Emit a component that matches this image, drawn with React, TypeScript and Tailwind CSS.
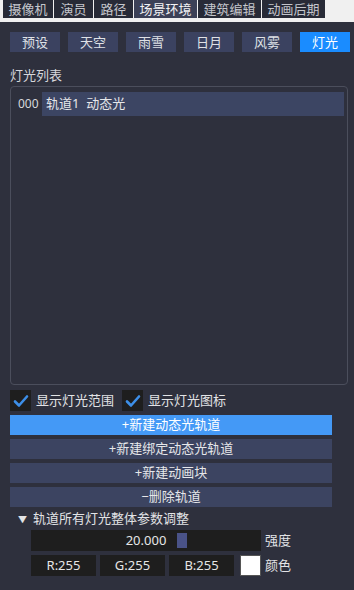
import React from "react";

const font = { fontFamily: '"Noto Sans", "Noto Sans CJK SC", sans-serif' };

function Check() {
  return (
    <div className="w-[21px] h-[21px] bg-[#1e1e1e] flex items-center justify-center">
      <svg width="16" height="14" viewBox="0 0 16 14">
        <polyline points="2,7.5 6,11.5 14,2.5" fill="none" stroke="#3d8fe8" strokeWidth="2.6" strokeLinecap="round" strokeLinejoin="round" />
      </svg>
    </div>
  );
}

export default function App() {
  const tabs = [
    { t: "摄像机", w: "w-[50px]" },
    { t: "演员", w: "w-[39px]" },
    { t: "路径", w: "w-[39px]" },
    { t: "场景环境", w: "w-[63px]", a: true },
    { t: "建筑编辑", w: "w-[63px]" },
    { t: "动画后期", w: "w-[63px]" },
  ];
  const sub = ["预设", "天空", "雨雪", "日月", "风雾", "灯光"];
  return (
    <div className="w-[354px] h-[590px] bg-[#f0f0f0] flex flex-col overflow-hidden" style={font}>
      <div className="flex gap-[1px] pl-[3px] h-[18px]">
        {tabs.map((x) => (
          <div
            key={x.t}
            className={`${x.w} h-[18px] flex items-center justify-center text-[13px] leading-none ${x.a ? "bg-[#3c4157] text-[#f2f2f4]" : "bg-[#282b37] text-[#c4c6cc]"}`}
          >
            {x.t}
          </div>
        ))}
      </div>
      <div className="mt-[4px] flex-1 bg-[#2e303d] pl-[10px] pt-[10px] flex flex-col">
        <div className="flex gap-[8px] h-[20px]">
          {sub.map((s, i) => (
            <div
              key={s}
              className={`w-[50px] h-[20px] flex items-center justify-center text-[13px] leading-none ${i === 5 ? "bg-[#1a8cff] text-white" : "bg-[#3b4260] text-[#dfe1e6]"}`}
            >
              {s}
            </div>
          ))}
        </div>
        <div className="mt-[14px] h-[18px] leading-[18px] text-[13px] text-[#d6d7db]">灯光列表</div>
        <div className="mt-[2px] w-[338px] h-[299px] border border-[#4b4e5c] rounded-[4px] pt-[5px] pl-[7px]">
          <div className="flex items-center h-[24px]">
            <div className="w-[24px] text-[12px] text-[#d8d8dc] leading-none">000</div>
            <div className="w-[302px] h-[24px] bg-[#3c4563] flex items-center pl-[4px] text-[13px] text-[#e6e7ea]">
              轨道1&nbsp;&nbsp;动态光
            </div>
          </div>
        </div>
        <div className="mt-[5px] flex items-center h-[21px]">
          <Check />
          <span className="ml-[5px] text-[13px] text-[#e2e3e6]">显示灯光范围</span>
          <div className="ml-[8px]">
            <Check />
          </div>
          <span className="ml-[5px] text-[13px] text-[#e2e3e6]">显示灯光图标</span>
        </div>
        <div className="mt-[4px] flex flex-col gap-[4px] w-[322px]">
          <div className="h-[20px] bg-[#4499f6] flex items-center justify-center text-[13px] text-white">+新建动态光轨道</div>
          <div className="h-[20px] bg-[#3c4461] flex items-center justify-center text-[13px] text-[#e6e7ea]">+新建绑定动态光轨道</div>
          <div className="h-[20px] bg-[#3c4461] flex items-center justify-center text-[13px] text-[#e6e7ea]">+新建动画块</div>
          <div className="h-[20px] bg-[#3c4461] flex items-center justify-center text-[13px] text-[#e6e7ea]">−删除轨道</div>
        </div>
        <div className="mt-[3px] h-[18px] flex items-center text-[13px] text-[#e2e3e6]">
          <span className="ml-[8px] text-[9px] leading-none">▼</span>
          <span className="ml-[6px]">轨道所有灯光整体参数调整</span>
        </div>
        <div className="mt-[2px] ml-[21px] flex items-center h-[21px]">
          <div className="relative w-[230px] h-[21px] bg-[#1e1e1e] flex items-center justify-center text-[13px] text-[#e6e6e6]">
            <span>20.000</span>
            <div className="absolute left-[146px] top-[3px] w-[10px] h-[15px] bg-[#4a5388]" />
          </div>
          <span className="ml-[4px] text-[13px] text-[#e2e3e6]">强度</span>
        </div>
        <div className="mt-[4px] ml-[21px] flex items-center h-[21px] gap-[4px]">
          <div className="w-[65px] h-[21px] bg-[#1e1e1e] flex items-center justify-center text-[13px] text-[#e6e6e6]">R:255</div>
          <div className="w-[65px] h-[21px] bg-[#1e1e1e] flex items-center justify-center text-[13px] text-[#e6e6e6]">G:255</div>
          <div className="w-[65px] h-[21px] bg-[#1e1e1e] flex items-center justify-center text-[13px] text-[#e6e6e6]">B:255</div>
          <div className="ml-[2px] w-[21px] h-[21px] bg-white border border-[#555]" />
          <span className="text-[13px] text-[#e2e3e6]">颜色</span>
        </div>
      </div>
    </div>
  );
}
